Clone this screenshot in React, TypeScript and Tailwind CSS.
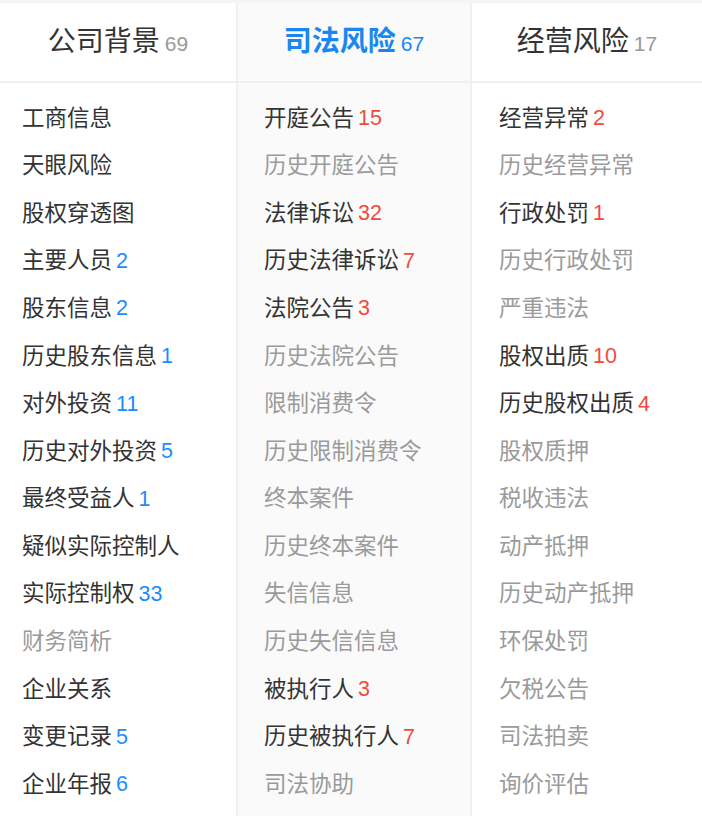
import React from "react";

type Item = { name: string; count?: number; muted?: boolean };

const col1: Item[] = [
  { name: "工商信息" },
  { name: "天眼风险" },
  { name: "股权穿透图" },
  { name: "主要人员", count: 2 },
  { name: "股东信息", count: 2 },
  { name: "历史股东信息", count: 1 },
  { name: "对外投资", count: 11 },
  { name: "历史对外投资", count: 5 },
  { name: "最终受益人", count: 1 },
  { name: "疑似实际控制人" },
  { name: "实际控制权", count: 33 },
  { name: "财务简析", muted: true },
  { name: "企业关系" },
  { name: "变更记录", count: 5 },
  { name: "企业年报", count: 6 },
];

const col2: Item[] = [
  { name: "开庭公告", count: 15 },
  { name: "历史开庭公告", muted: true },
  { name: "法律诉讼", count: 32 },
  { name: "历史法律诉讼", count: 7 },
  { name: "法院公告", count: 3 },
  { name: "历史法院公告", muted: true },
  { name: "限制消费令", muted: true },
  { name: "历史限制消费令", muted: true },
  { name: "终本案件", muted: true },
  { name: "历史终本案件", muted: true },
  { name: "失信信息", muted: true },
  { name: "历史失信信息", muted: true },
  { name: "被执行人", count: 3 },
  { name: "历史被执行人", count: 7 },
  { name: "司法协助", muted: true },
];

const col3: Item[] = [
  { name: "经营异常", count: 2 },
  { name: "历史经营异常", muted: true },
  { name: "行政处罚", count: 1 },
  { name: "历史行政处罚", muted: true },
  { name: "严重违法", muted: true },
  { name: "股权出质", count: 10 },
  { name: "历史股权出质", count: 4 },
  { name: "股权质押", muted: true },
  { name: "税收违法", muted: true },
  { name: "动产抵押", muted: true },
  { name: "历史动产抵押", muted: true },
  { name: "环保处罚", muted: true },
  { name: "欠税公告", muted: true },
  { name: "司法拍卖", muted: true },
  { name: "询价评估", muted: true },
];

function Column({
  title,
  total,
  items,
  active,
  numColor,
  widthClass,
  padClass,
  borderRight,
}: {
  title: string;
  total: number;
  items: Item[];
  active?: boolean;
  numColor: string;
  widthClass: string;
  padClass: string;
  borderRight?: boolean;
}) {
  return (
    <div
      className={`${widthClass} flex flex-col ${active ? "bg-[#fafafa]" : "bg-white"} ${
        borderRight ? "border-r-2 border-[#f0f0f0]" : ""
      }`}
    >
      <div className="h-[80px] flex items-center justify-center border-b-2 border-[#f0f0f0] pb-[1px]">
        <span
          className={`text-[28px] leading-none ${
            active ? "text-[#1a87f0] font-bold" : "text-[#333333]"
          }`}
        >
          {title}
        </span>
        <span
          className={`ml-[5px] text-[21px] leading-none mt-[3px] ${
            active ? "text-[#1a87f0]" : "text-[#999999]"
          }`}
        >
          {total}
        </span>
      </div>
      <div className={`flex flex-col pt-[12px] ${padClass}`}>
        {items.map((it) => (
          <div key={it.name} className="h-[47.6px] flex items-center">
            <span
              className={`text-[22.5px] leading-none ${
                it.muted ? "text-[#9a9a9a]" : "text-[#333333]"
              }`}
            >
              {it.name}
            </span>
            {it.count !== undefined && (
              <span className={`ml-[4px] text-[21.5px] leading-none ${numColor}`}>
                {it.count}
              </span>
            )}
          </div>
        ))}
      </div>
    </div>
  );
}

export default function App() {
  return (
    <div
      className="w-[702px] h-[816px] bg-white overflow-hidden border-t-[3px] border-[#f4f4f4]"
      style={{ fontFamily: '"Liberation Sans", "Noto Sans CJK SC", sans-serif' }}
    >
      <div className="flex h-full">
        <Column
          title="公司背景"
          total={69}
          items={col1}
          numColor="text-[#1a8cff]"
          widthClass="w-[238px]"
          padClass="pl-[22px]"
          borderRight
        />
        <Column
          title="司法风险"
          total={67}
          items={col2}
          active
          numColor="text-[#f04a3e]"
          widthClass="w-[234px]"
          padClass="pl-[26px]"
          borderRight
        />
        <Column
          title="经营风险"
          total={17}
          items={col3}
          numColor="text-[#f04a3e]"
          widthClass="w-[230px]"
          padClass="pl-[27px]"
        />
      </div>
    </div>
  );
}
